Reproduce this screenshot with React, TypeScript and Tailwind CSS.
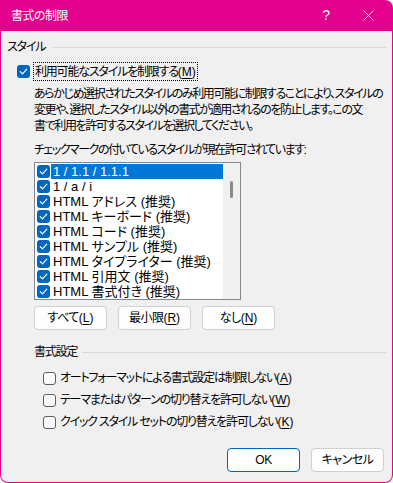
import React from "react";

const font = "[font-family:'Liberation_Sans','Noto_Sans_CJK_JP',sans-serif] [font-feature-settings:'palt']";

function Check() {
    return <svg width="9" height="9" viewBox="0 0 9 9" fill="none">
        <path d="M1.2 4.6 L3.5 6.8 L7.8 2.2" stroke="white" strokeWidth="1.2" strokeLinecap="round" strokeLinejoin="round" />
    </svg>;
}

function CheckedBox() {
    return <div className="w-[13px] h-[13px] shrink-0 rounded-[3px] bg-[#0067c0] flex items-center justify-center">
        <Check />
    </div>;
}

function EmptyBox() {
    return <div className="w-[13px] h-[13px] shrink-0 rounded-[3px] border border-[#5d5d5d] bg-[#fbfbfb]" />;
}

function Key({ k }: { k: string }) {
    return <span className="tracking-normal">(<span className="underline underline-offset-2">{k}</span>)</span>;
}

function Button({ children, primary }: { children: React.ReactNode; primary?: boolean }) {
    return <div className={primary
        ? "w-[73px] h-[24px] flex items-center justify-center rounded-[4px] border border-[#0067c0] bg-white text-[12px] tracking-[-0.5px]"
        : "w-[73px] h-[24px] flex items-center justify-center rounded-[4px] border border-[#d0d0d0] bg-[#fdfdfd] text-[12px] tracking-[-0.5px]"}>
        {children}
    </div>;
}

const styles = [
    "1 / 1.1 / 1.1.1",
    "1 / a / i",
    "HTML アドレス (推奨)",
    "HTML キーボード (推奨)",
    "HTML コード (推奨)",
    "HTML サンプル (推奨)",
    "HTML タイプライター (推奨)",
    "HTML 引用文 (推奨)",
    "HTML 書式付き (推奨)",
];

export default function App() {
    return <div className={"w-[393px] h-[483px] bg-white " + font}>
        <div className="w-[393px] h-[483px] flex flex-col bg-[#e3008c] rounded-tr-[8px] rounded-b-[8px] text-[#000]">
            {/* title bar */}
            <div className="h-[31px] flex items-center text-white text-[12px] shrink-0">
                <span className="ml-[11px] tracking-[-0.5px]">書式の制限</span>
                <span className="ml-auto text-[14px] mr-[33px]">?</span>
                <svg width="11" height="11" viewBox="0 0 11 11" className="mr-[19px]">
                    <path d="M0.5 0.5 L10.5 10.5 M10.5 0.5 L0.5 10.5" stroke="white" strokeWidth="1" />
                </svg>
            </div>

            <div className="flex-1 mx-px mb-px bg-[#f0f0f0] rounded-b-[7px] pt-[8px] pl-[6px] pr-[6px] text-[12px] leading-[16px] tracking-[-1.2px]">
                {/* スタイル */}
                <div className="flex items-center h-[16px]">
                    <span>スタイル</span>
                    <div className="flex-1 h-px bg-[#d9d9d9] ml-[7px]" />
                </div>

                <div className="flex items-center mt-[7px] pl-[10px] h-[19px]">
                    <CheckedBox />
                    <span className="ml-[3px] h-[19px] px-px flex items-center border border-dotted border-black">
                        利用可能なスタイルを制限する<Key k="M" />
                    </span>
                </div>

                <p className="mt-[5px] pl-[27px] whitespace-nowrap tracking-[-1.4px]">
                    あらかじめ選択されたスタイルのみ利用可能に制限することにより、スタイルの<br />
                    変更や、選択したスタイル以外の書式が適用されるのを防止します。この文<br />
                    書で利用を許可するスタイルを選択してください。
                </p>

                <div className="mt-[8px] pl-[27px] tracking-[-1.5px]">チェックマークの付いているスタイルが現在許可されています:</div>

                <div className="ml-[27px] mt-[4px] w-[207px] h-[138px] border border-[#828790] bg-white flex tracking-normal">
                    <div className="flex-1 pt-px">
                        {styles.map((s, i) =>
                            <div key={s} className="h-[15px] flex items-center pl-[2px]">
                                <CheckedBox />
                                <span className={i === 0
                                    ? "ml-[1px] flex-1 h-[15px] pl-[2px] flex items-center bg-[#0078d7] text-white text-[13px] leading-[15px]"
                                    : "ml-[1px] flex-1 h-[15px] pl-[2px] flex items-center text-[13px] leading-[15px]"}>
                                    {s}
                                </span>
                            </div>
                        )}
                    </div>
                    <div className="w-[17px] bg-[#f0f0f0] pt-[18px] flex justify-center">
                        <div className="w-[3px] h-[17px] rounded-full bg-[#8a8a8a]" />
                    </div>
                </div>

                <div className="flex gap-[11px] ml-[27px] mt-[6px]">
                    <Button>すべて<Key k="L" /></Button>
                    <Button>最小限<Key k="R" /></Button>
                    <Button>なし<Key k="N" /></Button>
                </div>

                {/* 書式設定 */}
                <div className="flex items-center h-[16px] mt-[14px] pl-[27px]">
                    <span>書式設定</span>
                    <div className="flex-1 h-px bg-[#d9d9d9] ml-[5px]" />
                </div>

                <div className="mt-[7px] pl-[36px]">
                    <div className="h-[22px] flex items-center gap-[4px]">
                        <EmptyBox />
                        <span>オートフォーマットによる書式設定は制限しない<Key k="A" /></span>
                    </div>
                    <div className="h-[22px] flex items-center gap-[4px]">
                        <EmptyBox />
                        <span>テーマまたはパターンの切り替えを許可しない<Key k="W" /></span>
                    </div>
                    <div className="h-[22px] flex items-center gap-[4px]">
                        <EmptyBox />
                        <span>クイック スタイル セットの切り替えを許可しない<Key k="K" /></span>
                    </div>
                </div>

                <div className="flex justify-end gap-[11px] mt-[15px] pr-[2px]">
                    <Button primary>OK</Button>
                    <Button>キャンセル</Button>
                </div>
            </div>
        </div>
    </div>;
}
